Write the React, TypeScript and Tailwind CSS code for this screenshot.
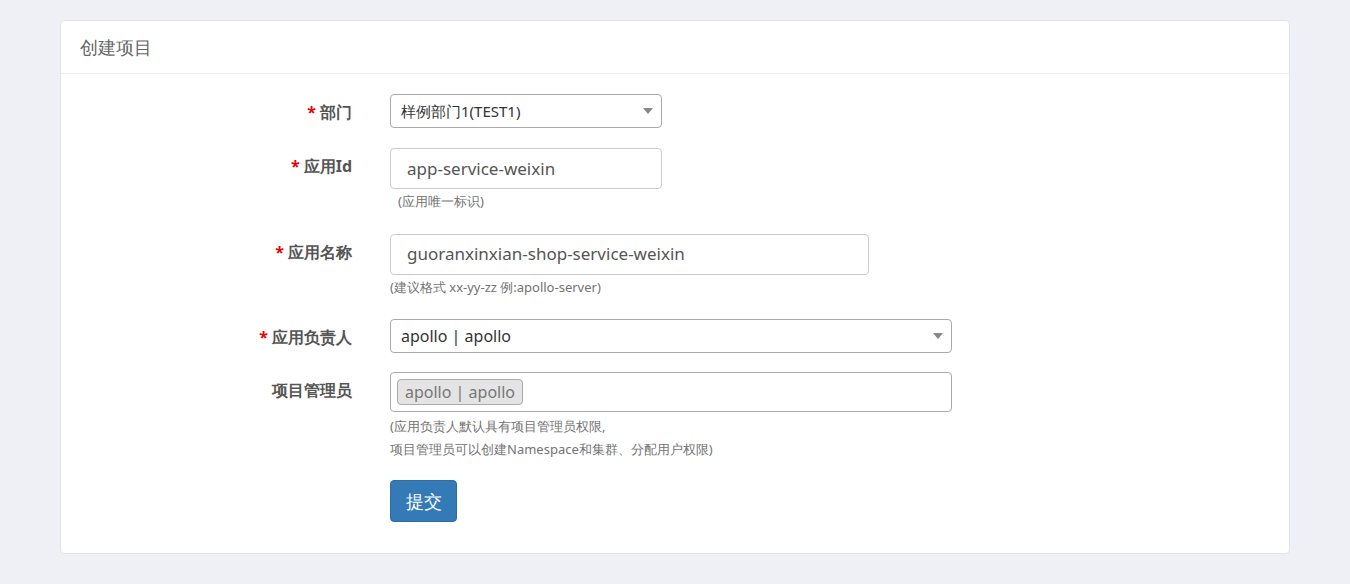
import { ReactNode } from "react";

function Row({ label, req, children, className }: { label: string; req?: boolean; children: ReactNode; className?: string }) {
  return (
    <div className={"flex " + (className ?? "")}>
      <div className="w-[291px] shrink-0 text-right font-bold text-[16px] text-[#555] leading-[20px] pt-[8px]">
        {req && <span className="text-[#e00] mr-1">*</span>}
        {label}
      </div>
      <div className="ml-[38px]">{children}</div>
    </div>
  );
}

function Caret() {
  return <span className="absolute right-[8px] top-1/2 -translate-y-1/2 border-x-[5px] border-x-transparent border-t-[6px] border-t-[#888]" />;
}

export default function App() {
  return (
    <div className="min-h-[584px] bg-[#eff0f5] pt-[20px] px-[60px] font-['Open_Sans','Noto_Sans_CJK_SC',sans-serif] text-[#333]">
      <div className="bg-white border border-[#e3e3e3] rounded-[4px] h-[534px]">
        <div className="h-[53px] border-b border-[#eee] px-[19px] flex items-center text-[18px] text-[#666]">创建项目</div>
        <div className="pt-[20px]">
          <Row label="部门" req>
            <div className="relative w-[272px] h-[34px] border border-[#aaa] rounded-[4px] flex items-center px-[10px] text-[15px]">
              样例部门1(TEST1)
              <Caret />
            </div>
          </Row>
          <Row label="应用Id" req className="mt-[20px]">
            <div className="w-[272px] h-[41px] border border-[#ccc] rounded-[4px] flex items-center px-[16px] text-[17px] text-[#555]">app-service-weixin</div>
            <div className="text-[13px] text-[#737373] mt-[3px] pl-[8px]">(应用唯一标识)</div>
          </Row>
          <Row label="应用名称" req className="mt-[22px]">
            <div className="w-[479px] h-[41px] border border-[#ccc] rounded-[4px] flex items-center px-[16px] text-[17px] text-[#555]">guoranxinxian-shop-service-weixin</div>
            <div className="text-[13px] text-[#737373] mt-[3px]">(建议格式 xx-yy-zz 例:apollo-server)</div>
          </Row>
          <Row label="应用负责人" req className="mt-[22px]">
            <div className="relative w-[562px] h-[34px] border border-[#aaa] rounded-[4px] flex items-center px-[10px] text-[16px]">
              apollo | apollo
              <Caret />
            </div>
          </Row>
          <Row label="项目管理员" className="mt-[19px]">
            <div className="w-[562px] h-[40px] border border-[#aaa] rounded-[4px] flex items-center px-[6px]">
              <span className="bg-[#e4e4e4] border border-[#aaa] rounded-[4px] px-[7px] h-[26px] flex items-center text-[16px] text-[#777]">apollo | apollo</span>
            </div>
            <div className="text-[13px] text-[#737373] mt-[3px] leading-[23px]">
              (应用负责人默认具有项目管理员权限,
              <br />
              项目管理员可以创建Namespace和集群、分配用户权限)
            </div>
            <button className="mt-[19px] w-[67px] h-[42px] bg-[#337ab7] border border-[#2e6da4] rounded-[4px] text-white text-[18px]">提交</button>
          </Row>
        </div>
      </div>
    </div>
  );
}
